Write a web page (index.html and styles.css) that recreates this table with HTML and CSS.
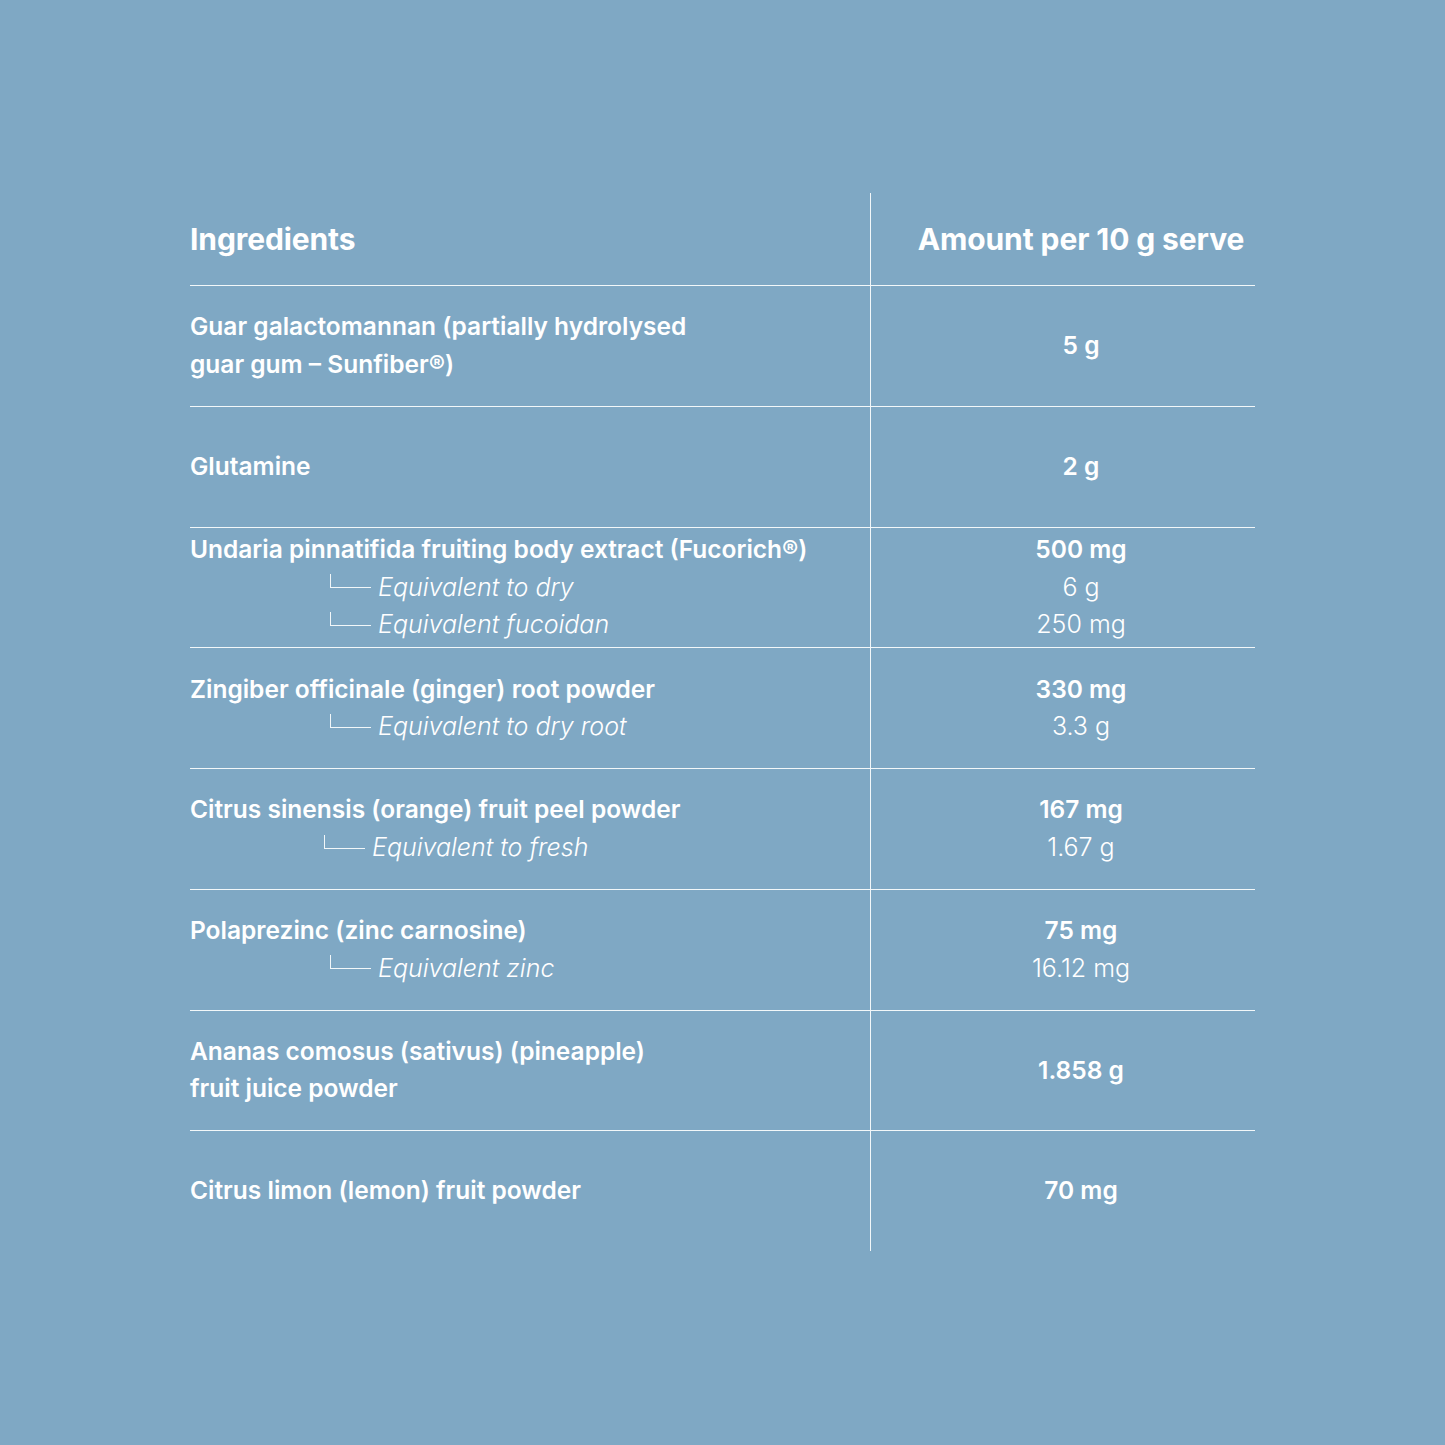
FILE: index.html
```html
<!DOCTYPE html>
<html>
<head>
<meta charset="utf-8">
<link rel="stylesheet" href="styles.css">
</head>
<body>
<div class="table">
  <div class="row head">
    <div class="cell name"><div class="h">Ingredients</div></div>
    <div class="cell amt"><div class="h">Amount per 10 g serve</div></div>
  </div>
  <div class="row">
    <div class="cell name"><div class="main">Guar galactomannan (partially hydrolysed<br>guar gum – Sunfiber®)</div></div>
    <div class="cell amt"><div class="main">5 g</div></div>
  </div>
  <div class="row">
    <div class="cell name"><div class="main">Glutamine</div></div>
    <div class="cell amt"><div class="main">2 g</div></div>
  </div>
  <div class="row">
    <div class="cell name">
      <div class="main">Undaria pinnatifida fruiting body extract (Fucorich®)</div>
      <div class="sub"><span class="corner"></span>Equivalent to dry</div>
      <div class="sub"><span class="corner"></span>Equivalent fucoidan</div>
    </div>
    <div class="cell amt">
      <div class="main">500 mg</div>
      <div class="subv">6 g</div>
      <div class="subv">250 mg</div>
    </div>
  </div>
  <div class="row">
    <div class="cell name">
      <div class="main">Zingiber officinale (ginger) root powder</div>
      <div class="sub"><span class="corner"></span>Equivalent to dry root</div>
    </div>
    <div class="cell amt">
      <div class="main">330 mg</div>
      <div class="subv">3.3 g</div>
    </div>
  </div>
  <div class="row">
    <div class="cell name">
      <div class="main">Citrus sinensis (orange) fruit peel powder</div>
      <div class="sub alt"><span class="corner"></span>Equivalent to fresh</div>
    </div>
    <div class="cell amt">
      <div class="main">167 mg</div>
      <div class="subv">1.67 g</div>
    </div>
  </div>
  <div class="row">
    <div class="cell name">
      <div class="main">Polaprezinc (zinc carnosine)</div>
      <div class="sub"><span class="corner"></span>Equivalent zinc</div>
    </div>
    <div class="cell amt">
      <div class="main">75 mg</div>
      <div class="subv">16.12 mg</div>
    </div>
  </div>
  <div class="row">
    <div class="cell name"><div class="main">Ananas comosus (sativus) (pineapple)<br>fruit juice powder</div></div>
    <div class="cell amt"><div class="main">1.858 g</div></div>
  </div>
  <div class="row">
    <div class="cell name"><div class="main">Citrus limon (lemon) fruit powder</div></div>
    <div class="cell amt"><div class="main">70 mg</div></div>
  </div>
</div>
</body>
</html>
```
FILE: styles.css
```css
html, body {
  margin: 0;
  padding: 0;
}
body {
  background: #7fa8c4;
  color: #ffffff;
  font-family: Inter, "Noto Sans", sans-serif;
  width: 1445px;
  height: 1445px;
  padding-top: 193px;
  box-sizing: border-box;
}
.table {
  margin-left: 190px;
  width: 1065px;
}
.row {
  display: grid;
  grid-template-columns: 680px 385px;
  height: 120.75px;
  box-sizing: border-box;
  border-top: 1px solid rgba(255,255,255,0.9);
}
.row.head {
  height: 92px;
  border-top: none;
}
.cell {
  display: flex;
  flex-direction: column;
  justify-content: center;
}
.cell.amt {
  border-left: 1px solid rgba(255,255,255,0.9);
  align-items: center;
  padding-left: 36px;
  text-align: center;
}
.h {
  font-size: 30px;
  font-weight: 700;
  letter-spacing: -0.1px;
  line-height: 36px;
}
.main {
  font-size: 24.5px;
  font-weight: 600;
  line-height: 37.5px;
}
.sub {
  font-size: 25px;
  font-weight: 300;
  font-style: italic;
  line-height: 37.5px;
  padding-left: 140px;
  display: flex;
  align-items: center;
}
.sub.alt {
  padding-left: 134px;
}
.corner {
  display: inline-block;
  width: 40px;
  height: 13px;
  border-left: 1px solid rgba(255,255,255,0.9);
  border-bottom: 1px solid rgba(255,255,255,0.9);
  margin-right: 7px;
  margin-top: -12px;
}
.subv {
  font-size: 25px;
  font-weight: 300;
  line-height: 37.5px;
}
```
